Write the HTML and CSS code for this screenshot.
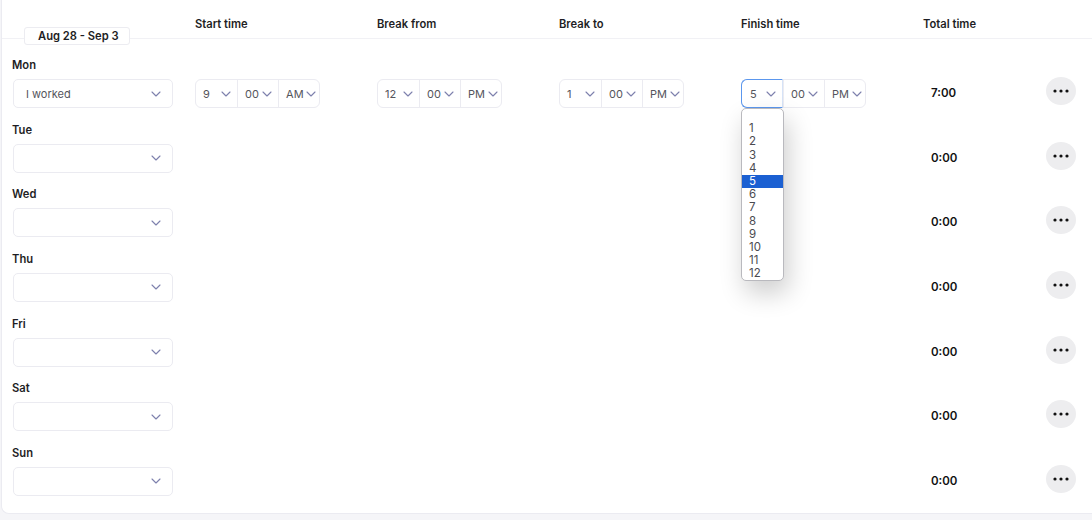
FILE: index.html
```html
<!DOCTYPE html>
<html lang="en">
<head>
    <meta charset="UTF-8">
    <title>Timesheet</title>
    <meta name="viewport" content="width=device-width, initial-scale=1.0">
    <link rel="stylesheet" href="styles.css">
</head>
<body>

<div class="sheet">
    <div class="sheet-head">
        <span class="week-badge">Aug 28 - Sep 3</span>
        <span class="col-title first">Start time</span>
        <span class="col-title">Break from</span>
        <span class="col-title">Break to</span>
        <span class="col-title">Finish time</span>
        <span class="col-title">Total time</span>
    </div>

    <div class="rows" id="rows"></div>
</div>

<script>
    const chevron = '<svg class="chev" width="10" height="6" viewBox="0 0 10 6"><polyline points="1,1 5,5 9,1" fill="none" stroke="#7d80ad" stroke-width="1.1" stroke-linecap="round" stroke-linejoin="round"/></svg>';
    const dots = '<svg width="16" height="4" viewBox="0 0 16 4"><circle cx="2" cy="2" r="1.6"/><circle cx="8" cy="2" r="1.6"/><circle cx="14" cy="2" r="1.6"/></svg>';

    const days = [
        { name: "Mon", status: "I worked", total: "7:00",
          times: [["9", "00", "AM"], ["12", "00", "PM"], ["1", "00", "PM"], ["5", "00", "PM"]] },
        { name: "Tue", status: "", total: "0:00" },
        { name: "Wed", status: "", total: "0:00" },
        { name: "Thu", status: "", total: "0:00" },
        { name: "Fri", status: "", total: "0:00" },
        { name: "Sat", status: "", total: "0:00" },
        { name: "Sun", status: "", total: "0:00" }
    ];

    function timeGroup(parts, focused) {
        const cls = ["seg seg-h", "seg seg-m", "seg seg-ap"];
        let html = '<div class="time-group">';
        parts.forEach((p, i) => {
            const f = focused && i === 0 ? " focused" : "";
            html += `<div class="${cls[i]}${f}"><span>${p}</span>${chevron}</div>`;
        });
        return html + '</div>';
    }

    function render() {
        let html = "";
        days.forEach(d => {
            html += '<div class="day-row">';
            html += `<div class="day-cell"><div class="day-name">${d.name}</div>`;
            html += `<div class="status-select"><span>${d.status}</span>${chevron}</div></div>`;
            for (let c = 0; c < 4; c++) {
                html += '<div class="time-cell">';
                if (d.times) html += timeGroup(d.times[c], c === 3);
                html += '</div>';
            }
            html += `<div class="total-cell">${d.total}</div>`;
            html += `<div class="more-cell"><button class="more-btn">${dots}</button></div>`;
            html += '</div>';
        });
        document.getElementById("rows").innerHTML = html;

        // open dropdown of the finish hour
        const seg = document.querySelector(".seg.focused");
        let list = '<ul class="hour-list"><li>&nbsp;</li>';
        for (let h = 1; h <= 12; h++) {
            list += `<li${h === 5 ? ' class="picked"' : ''}>${h}</li>`;
        }
        seg.insertAdjacentHTML("beforeend", list + '</ul>');
    }

    render();
</script>

</body>
</html>
```

FILE: styles.css
```css
:root {
    --line: #ebebf1;
    --ink: #1e1e24;
    --muted: #55555c;
}

body {
    margin: 0;
    background: #f5f5f8;
    font-family: Inter, "Noto Sans", sans-serif;
    color: var(--ink);
}

.sheet {
    margin-left: 1px;
    height: 514px;
    box-sizing: border-box;
    background: white;
    border-left: 1px solid var(--line);
    border-bottom: 1px solid var(--line);
    border-bottom-left-radius: 8px;
}

.sheet-head {
    position: relative;
    display: grid;
    grid-template-columns: 193px 182px 182px 182px 182px 160px;
    height: 38px;
    border-bottom: 1px solid #f1f1f5;
}

.col-title {
    font-size: 11.2px;
    font-weight: 600;
    line-height: 15px;
    padding-top: 17px;
}

.col-title.first {
    grid-column: 2;
}

.week-badge {
    position: absolute;
    left: 22px;
    top: 27px;
    width: 106px;
    height: 18px;
    box-sizing: border-box;
    padding-left: 13px;
    background: white;
    border: 1px solid #ececf1;
    border-radius: 3px;
    font-size: 11.2px;
    font-weight: 600;
    line-height: 16px;
}

.rows {
    padding-top: 19px;
}

.day-row {
    display: grid;
    grid-template-columns: 193px 182px 182px 182px 182px 123px 36px;
    height: 64.67px;
}

.day-cell {
    padding-left: 10px;
}

.day-name {
    font-size: 11.2px;
    font-weight: 600;
    line-height: 15px;
    margin-bottom: 6px;
}

.status-select {
    display: flex;
    align-items: center;
    justify-content: space-between;
    width: 160px;
    height: 29px;
    box-sizing: border-box;
    margin-left: 1px;
    padding: 0 11px 0 12px;
    border: 1px solid var(--line);
    border-radius: 5px;
    font-size: 11px;
    color: var(--muted);
}

.time-cell {
    padding-top: 21px;
}

.time-group {
    display: flex;
    width: 125px;
    height: 29px;
    box-sizing: border-box;
    border: 1px solid var(--line);
    border-radius: 6px;
}

.seg {
    position: relative;
    display: flex;
    align-items: center;
    justify-content: space-between;
    width: 42px;
    box-sizing: border-box;
    padding: 0 6px 0 7px;
    font-size: 11px;
    color: var(--muted);
}

.seg + .seg {
    border-left: 1px solid var(--line);
}

.seg-ap {
    padding-right: 3px;
}

.seg.focused {
    margin: -1px 0 -1px -1px;
    width: 43px;
    padding-left: 8px;
    border: 1.5px solid #5b97ee;
    border-right-color: #d6e3f7;
    border-radius: 6px 0 0 6px;
}

.hour-list {
    position: absolute;
    top: 28px;
    left: -1px;
    width: 41px;
    margin: 0;
    padding: 0;
    list-style: none;
    background: white;
    border: 1px solid #b9b9be;
    border-radius: 5px;
    box-shadow: 4px 12px 26px rgba(0, 0, 0, 0.2);
    overflow: hidden;
    z-index: 2;
}

.hour-list li {
    height: 13.2px;
    line-height: 13.2px;
    padding-left: 7px;
    font-size: 11.5px;
    color: #4a4a50;
}

.hour-list li.picked {
    background: #1b60d2;
    color: white;
}

.total-cell {
    padding: 21px 0 0 8px;
    line-height: 29px;
    font-size: 11.5px;
    font-weight: 600;
    color: #111;
}

.more-cell {
    padding-top: 19px;
}

.more-btn {
    display: flex;
    align-items: center;
    justify-content: center;
    width: 30px;
    height: 28px;
    padding: 0;
    border: none;
    border-radius: 50%;
    background: #ededef;
    fill: #111;
}
```
